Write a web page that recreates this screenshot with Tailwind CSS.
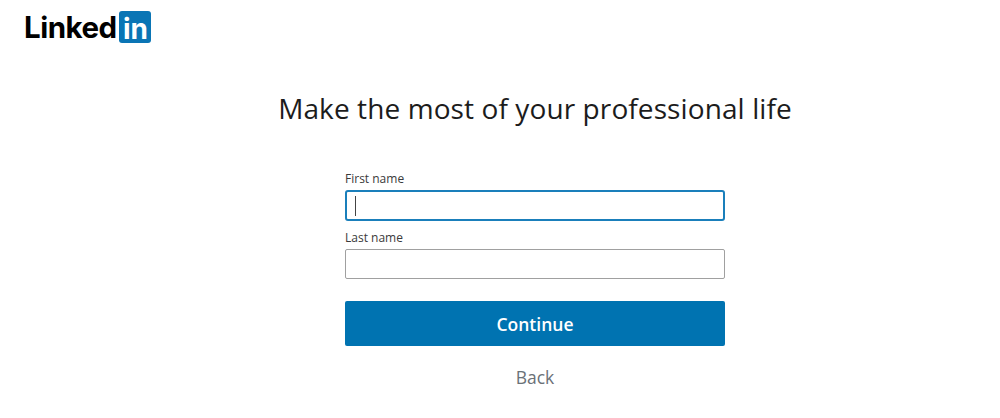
<!DOCTYPE html>
<html lang="en">
<head>
    <meta charset="UTF-8">
    <title>LinkedIn</title>
    <script src="https://cdn.jsdelivr.net/npm/@tailwindcss/browser@4"></script>
</head>
<body class="bg-white h-[418px] overflow-hidden font-['Open_Sans',sans-serif]">

    <header class="pl-[24px] pt-[11px] h-[44px] flex items-start">
        <div class="flex items-center h-[32px]">
            <span class="font-['Inter',sans-serif] font-bold text-[29.5px] leading-[34px] tracking-[-0.5px] text-black w-[95px]">Linked</span>
            <span class="w-[32px] h-[32px] rounded-[3px] bg-[#0a75b5] text-white font-['Inter',sans-serif] font-bold text-[28px] leading-[32px] tracking-[-0.2px] pl-[4px] pt-[2px]">in</span>
        </div>
    </header>

    <main class="flex flex-col items-center">
        <h1 class="mt-[46px] text-[28px] leading-[36px] tracking-[0.1px] text-[#1c1c1c] w-full text-center pl-[70px]">Make the most of your professional life</h1>

        <form class="w-[380px] mt-[45px] ml-[70px]">
            <label class="block text-[12px] leading-[16px] text-[#3a3a3a]">First name</label>
            <div class="mt-[3px] h-[31px] border-2 border-[#1a7fbb] rounded-[3px] flex items-center pl-[8px]">
                <span class="w-[1px] h-[20px] bg-[#444]"></span>
            </div>
            <label class="block mt-[9px] text-[12px] leading-[16px] text-[#3a3a3a]">Last name</label>
            <div class="mt-[3px] h-[30px] border border-[#a0a0a0] rounded-[2px]"></div>
            <button type="button" class="block w-full mt-[22px] h-[45px] pt-[2px] bg-[#0073b1] rounded-[2px] text-white font-semibold text-[17.5px]">Continue</button>
            <div class="mt-[19px] text-center text-[17.5px] leading-[24px] font-[530] text-[#6b7177]">Back</div>
        </form>
    </main>

</body>
</html>
